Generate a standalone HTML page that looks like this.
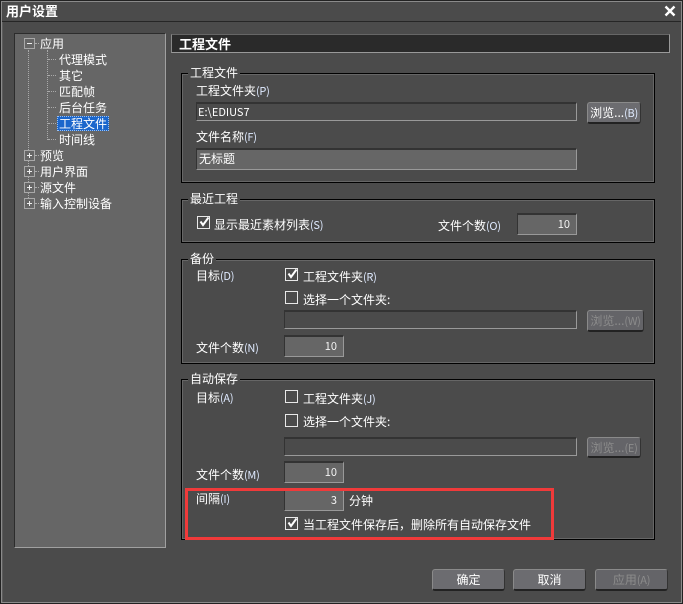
<!DOCTYPE html>
<html><head><meta charset="utf-8"><style>
html,body{margin:0;padding:0;background:#4b4b4b}
#w{position:relative;width:683px;height:604px;overflow:hidden;background:#4b4b4b;font:12px/14px "WenQuanYi Zen Hei","Noto Sans CJK SC",sans-serif;color:#fff}
#w div,#w span.a{position:absolute;box-sizing:border-box}
.t{white-space:nowrap}
.k{font-size:11px;letter-spacing:-.3px;color:#dfeaff}
.gb{position:absolute;box-sizing:border-box;border-style:solid;border-width:1px;border-color:#000}
.gi{position:absolute;inset:0;border:1px solid #666}
.lg{background:#4b4b4b;padding:0 2px;white-space:nowrap}
.in{border:1px solid;border-color:#333 #999 #999 #333;background:#4b4b4b;border-width:2px 1px 1px 1px}
.num{background:#666;text-align:right;padding-right:6px;line-height:18px;font-size:11px;color:#f4f4f4}
.btn{background:#6c6c70;border:1px solid #8a8a8a;border-bottom:2px solid #222;border-right:1px solid #333;border-radius:3px;text-align:center;color:#fff;line-height:19px;white-space:nowrap}
.cb{width:13px;height:13px;border:1px solid #e8e8e8}
.dis{color:#8c8c8c;background:#646468}
.dis .k{color:#8c8c8c}
.d{border-top:1px dotted #aaa;height:1px}
.v{border-left:1px dotted #aaa;width:1px}
.ex{width:11px;height:11px;border:1px solid #a8a8a8;background:#666}
.ex:before{content:"";position:absolute;left:2px;top:4px;width:5px;height:1px;background:#eee}
.ex.p:after{content:"";position:absolute;left:4px;top:2px;width:1px;height:5px;background:#eee}
</style></head><body><div id="w">
<div style="left:0;top:0;width:683px;height:604px;border:1px solid #222"></div>
<div style="left:1px;top:1px;width:681px;height:602px;border:1px solid #8a8a8a"></div>
<div style="left:2px;top:21px;width:679px;height:1px;background:#262626"></div>
<div style="left:2px;top:22px;width:1px;height:580px;background:#5c5c5c"></div>
<div class="t" style="left:6px;top:4px;font-weight:bold;font-size:13px;color:#fff">用户设置</div>
<svg style="position:absolute;left:664px;top:5px" width="12" height="12" viewBox="0 0 12 12"><path d="M1.5 1.5L10.5 10.5M10.5 1.5L1.5 10.5" stroke="#fff" stroke-width="2.4"/></svg>

<!-- tree -->
<div style="left:14px;top:33px;width:152px;height:515px;background:#666;border:1px solid;border-color:#2c2c2c #a0a0a0 #a0a0a0 #2c2c2c"></div>
<div class="v" style="left:28px;top:50px;height:150px"></div>
<div class="v" style="left:47px;top:50px;height:90px"></div>
<div class="d" style="left:35px;top:43px;width:4px"></div>
<div class="d" style="left:48px;top:59px;width:8px"></div>
<div class="d" style="left:48px;top:75px;width:8px"></div>
<div class="d" style="left:48px;top:91px;width:8px"></div>
<div class="d" style="left:48px;top:107px;width:8px"></div>
<div class="d" style="left:48px;top:123px;width:8px"></div>
<div class="d" style="left:48px;top:139px;width:8px"></div>
<div class="d" style="left:35px;top:155px;width:4px"></div>
<div class="d" style="left:35px;top:171px;width:4px"></div>
<div class="d" style="left:35px;top:187px;width:4px"></div>
<div class="d" style="left:35px;top:203px;width:4px"></div>
<div class="ex" style="left:24px;top:38px"></div>
<div class="ex p" style="left:24px;top:150px"></div>
<div class="ex p" style="left:24px;top:166px"></div>
<div class="ex p" style="left:24px;top:182px"></div>
<div class="ex p" style="left:24px;top:198px"></div>
<div style="left:57px;top:116px;width:52px;height:15px;background:#1a66cc;border:1px dotted #9cc0ee"></div>
<div class="t" style="left:40px;top:37px">应用</div>
<div class="t" style="left:59px;top:53px">代理模式</div>
<div class="t" style="left:59px;top:69px">其它</div>
<div class="t" style="left:59px;top:85px">匹配帧</div>
<div class="t" style="left:59px;top:101px">后台任务</div>
<div class="t" style="left:59px;top:117px">工程文件</div>
<div class="t" style="left:59px;top:133px">时间线</div>
<div class="t" style="left:40px;top:149px">预览</div>
<div class="t" style="left:40px;top:165px">用户界面</div>
<div class="t" style="left:40px;top:181px">源文件</div>
<div class="t" style="left:40px;top:197px">输入控制设备</div>

<!-- header -->
<div style="left:171px;top:34px;width:499px;height:19px;background:#2a2a2a;border:1px solid;border-color:#666 #999 #999 #888"></div>
<div class="t" style="left:179px;top:37px;font-weight:bold;font-size:13px;color:#fff">工程文件</div>

<!-- group 1 -->
<div class="gb" style="left:181px;top:73px;width:474px;height:110px"><div class="gi"></div></div>
<div class="lg t" style="left:188px;top:66px">工程文件</div>
<div class="t" style="left:196px;top:84px">工程文件夹<span class="k">(P)</span></div>
<div class="in" style="left:196px;top:102px;width:381px;height:19px"></div>
<div class="t" style="left:198px;top:105px;font-size:11px">E:\EDIUS7</div>
<div class="btn" style="left:587px;top:102px;width:54px;height:22px">浏览...<span class="k">(B)</span></div>
<div class="t" style="left:196px;top:130px">文件名称<span class="k">(F)</span></div>
<div class="in" style="left:196px;top:148px;width:381px;height:22px;background:#666"></div>
<div class="t" style="left:199px;top:152px">无标题</div>

<!-- group 2 -->
<div class="gb" style="left:181px;top:199px;width:474px;height:44px"><div class="gi"></div></div>
<div class="lg t" style="left:188px;top:192px">最近工程</div>
<div class="cb a" style="left:197px;top:216px"></div>
<svg style="position:absolute;left:198px;top:215px" width="13" height="13" viewBox="0 0 13 13"><path d="M2.5 6.5L5 10L10.5 2.5" fill="none" stroke="#fff" stroke-width="2"/></svg>
<div class="t" style="left:214px;top:218px">显示最近素材列表<span class="k">(S)</span></div>
<div class="t" style="left:438px;top:219px">文件个数<span class="k">(O)</span></div>
<div class="in num" style="left:517px;top:213px;width:60px;height:22px">10</div>

<!-- group 3 -->
<div class="gb" style="left:181px;top:259px;width:474px;height:105px"><div class="gi"></div></div>
<div class="lg t" style="left:188px;top:252px">备份</div>
<div class="t" style="left:196px;top:269px">目标<span class="k">(D)</span></div>
<div class="cb a" style="left:285px;top:268px"></div>
<svg style="position:absolute;left:286px;top:267px" width="13" height="13" viewBox="0 0 13 13"><path d="M2.5 6.5L5 10L10.5 2.5" fill="none" stroke="#fff" stroke-width="2"/></svg>
<div class="t" style="left:303px;top:270px">工程文件夹<span class="k">(R)</span></div>
<div class="cb a" style="left:285px;top:291px"></div>
<div class="t" style="left:303px;top:293px">选择一个文件夹:</div>
<div class="in" style="left:284px;top:310px;width:293px;height:19px"></div>
<div class="btn dis" style="left:587px;top:310px;width:57px;height:22px">浏览...<span class="k">(W)</span></div>
<div class="t" style="left:196px;top:341px">文件个数<span class="k">(N)</span></div>
<div class="in num" style="left:284px;top:335px;width:60px;height:22px">10</div>

<!-- group 4 -->
<div class="gb" style="left:181px;top:379px;width:474px;height:161px"><div class="gi"></div></div>
<div class="lg t" style="left:188px;top:372px">自动保存</div>
<div class="t" style="left:196px;top:391px">目标<span class="k">(A)</span></div>
<div class="cb a" style="left:285px;top:390px"></div>
<div class="t" style="left:303px;top:392px">工程文件夹<span class="k">(J)</span></div>
<div class="cb a" style="left:285px;top:414px"></div>
<div class="t" style="left:303px;top:415px">选择一个文件夹:</div>
<div class="in" style="left:284px;top:437px;width:293px;height:19px"></div>
<div class="btn dis" style="left:587px;top:437px;width:54px;height:21px">浏览...<span class="k">(E)</span></div>
<div class="t" style="left:196px;top:468px">文件个数<span class="k">(M)</span></div>
<div class="in num" style="left:284px;top:461px;width:60px;height:22px">10</div>
<div class="t" style="left:196px;top:492px">间隔<span class="k">(I)</span></div>
<div class="in num" style="left:284px;top:489px;width:60px;height:22px">3</div>
<div class="t" style="left:349px;top:494px">分钟</div>
<div class="cb a" style="left:285px;top:517px"></div>
<svg style="position:absolute;left:286px;top:516px" width="13" height="13" viewBox="0 0 13 13"><path d="M2.5 6.5L5 10L10.5 2.5" fill="none" stroke="#fff" stroke-width="2"/></svg>
<div class="t" style="left:303px;top:518px">当工程文件保存后，删除所有自动保存文件</div>
<div style="left:185px;top:488px;width:369px;height:52px;border:3px solid #f03a3a"></div>

<!-- buttons -->
<div class="btn" style="left:432px;top:569px;width:73px;height:22px">确定</div>
<div class="btn" style="left:513px;top:569px;width:73px;height:22px">取消</div>
<div class="btn dis" style="left:595px;top:569px;width:73px;height:22px">应用<span class="k">(A)</span></div>
</div></body></html>
